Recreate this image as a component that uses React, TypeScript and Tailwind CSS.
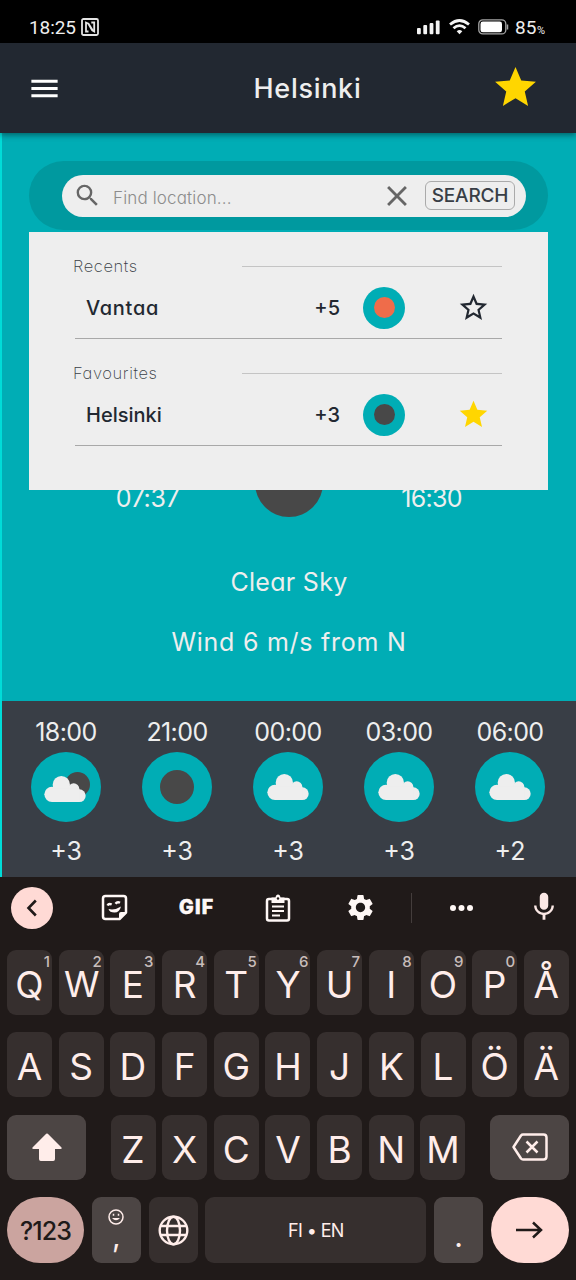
import type { ReactNode } from "react";
import { MdClose, MdMenu, MdMic, MdSearch, MdSettings, MdStar, MdStarBorder } from "react-icons/md";

function StatusBar() {
  return (
    <div className="flex h-[43px] shrink-0 items-start bg-black pt-[18px] pr-[30px] pl-[29px] font-[Roboto,sans-serif] text-[19px] leading-[20px] text-[#eeeeee]">
      <span className="w-[52px] tracking-[-0.1px]">18:25</span>
      <svg className="h-[18px] w-[18px]" viewBox="0 0 18 18" fill="none" stroke="#e4e4e4" strokeWidth="1.800">
        <rect x="1" y="1" width="16" height="16" rx="1.5" />
        <path d="M7.500 13.500H5V4.600l2.500 1.200L11.500 12M10.300 4.500H13.200V13.400L11.200 12.300L7.800 6.500" />
      </svg>
      <div className="ml-auto flex items-start">
        <svg className="mt-[2px] h-[15px] w-[23px]" viewBox="0 0 23 15" fill="#f4f4f4">
          <rect x="0" y="8" width="3.800" height="6.300" rx="1" />
          <rect x="6.300" y="5" width="3.800" height="9.300" rx="1" />
          <rect x="12.600" y="3" width="3.800" height="11.300" rx="1" />
          <rect x="18.800" y="0.500" width="3.800" height="13.800" rx="1" />
        </svg>
        <svg className="mt-px ml-[9px] h-[16px] w-[21px]" viewBox="0 0 21 16" fill="none" stroke="#f4f4f4" strokeWidth="2.800">
          <path d="M1 5.500Q10.500-2.500 20 5.500" />
          <path d="M4.500 9.300Q10.500 4 16.500 9.300" />
          <path d="M7.700 12.300Q10.500 9.500 13.300 12.300L10.500 15.300Z" fill="#f4f4f4" stroke="none" />
        </svg>
        <svg className="mt-[1px] ml-[8px] h-[16px] w-[31px]" viewBox="0 0 31 16" fill="none">
          <rect x="0.800" y="0.900" width="27" height="14" rx="4" stroke="#a5a5a5" strokeWidth="1.300" />
          <rect x="2.500" y="2.600" width="21.500" height="10.600" rx="2.300" fill="#fff" />
          <path d="M29.500 5.500v5" stroke="#a5a5a5" strokeWidth="1.500" />
        </svg>
        <span className="ml-[6px] w-[22px]">85</span>
        <span className="mt-[3px] w-[9px] text-[11px]">%</span>
      </div>
    </div>
  );
}

function Cloud({ className }: { className: string }) {
  return (
    <svg className={className} viewBox="0 0 124 78" fill="#eeeeee">
      <circle cx="51" cy="26" r="26" />
      <circle cx="88" cy="39" r="17" />
      <circle cx="23" cy="55" r="23" />
      <circle cx="105" cy="59" r="19" />
      <rect x="23" y="38" width="82" height="40" />
    </svg>
  );
}

type Place = { section: string; name: string; nameStyle: string; temp: string; dot: string; starred: boolean };
const places: Place[] = [
  { section: "Recents", name: "Vantaa", nameStyle: "tracking-[0.7px]", temp: "+5", dot: "bg-[#ef6c4a]", starred: false },
  { section: "Favourites", name: "Helsinki", nameStyle: "tracking-normal", temp: "+3", dot: "bg-[#484848]", starred: true },
];

function PlaceSection({ place }: { place: Place }) {
  return (
    <div className="h-[107px]">
      <div className="flex h-[20px] items-center">
        <span className="w-[169px] text-[16.500px] font-extralight tracking-[0.6px] text-[#393e46]">{place.section}</span>
        <span className="h-px w-[260px] bg-[#c4c4c4]" />
      </div>
      <div className="ml-[2px] flex h-[63px] w-[427px] items-center border-b border-[#a8a8a8] pt-px text-[20px] font-medium text-[#222831]">
        <span className={`w-[229px] pl-[11px] ${place.nameStyle}`}>{place.name}</span>
        <span className="w-[36px] text-right">{place.temp}</span>
        <span className="ml-[23px] flex h-[42px] w-[42px] items-center justify-center rounded-full bg-[#00adb5]">
          <span className={`h-[21px] w-[21px] rounded-full ${place.dot}`} />
        </span>
        <span className="ml-[52px]">
          {place.starred ? <MdStar size={33} color="#ffd600" /> : <MdStarBorder size={33} />}
        </span>
      </div>
    </div>
  );
}

function WeatherPanel() {
  return (
    <div className="relative flex h-[568px] shrink-0 flex-col border-l-2 border-[#00dcd8] bg-[#00adb5] pt-[28px] text-[#eeeeee]">
      <div className="ml-[27px] flex h-[69px] w-[519px] items-center rounded-full bg-[#00999f] pl-[33px]">
        <div className="flex h-[42px] w-[464px] items-center rounded-full bg-[#eeeeee] pl-[11px]">
          <MdSearch size={29} color="#666666" />
          <span className="mt-[5px] ml-[11px] w-[267px] text-[17px] font-light tracking-[0.15px] text-[#8c8c8c]">Find location...</span>
          <MdClose size={34} color="#666666" />
          <span className="ml-[11px] flex h-[29px] w-[90px] items-center justify-center rounded-[6px] border border-[#aaaaaa] text-[19px] font-medium tracking-[-0.15px] text-[#393e46]">
            SEARCH
          </span>
        </div>
      </div>
      <div className="mt-[220px] grid grid-cols-[291px_277px] text-center text-[25px]">
        <span className="pt-[34px] leading-[28px] tracking-[-0.4px]">07:37</span>
        <span className="pt-[34px] leading-[28px] tracking-[-0.7px]">16:30</span>
      </div>
      <div className="absolute top-[316px] left-[253px] h-[68px] w-[68px] rounded-full bg-[#484848]" />
      <div className="mt-[55px] text-center text-[25px] leading-[30px] tracking-[0.3px]">Clear Sky</div>
      <div className="mt-[30px] text-center text-[25px] leading-[30px] tracking-[0.75px]">Wind 6 m/s from N</div>
      <div className="absolute top-[99px] left-[27px] h-[258px] w-[519px] bg-[#eeeeee] pt-[24px] pl-[44px]">
        {places.map((place) => (
          <PlaceSection key={place.name} place={place} />
        ))}
      </div>
    </div>
  );
}

const forecast = [
  { time: "18:00", temp: "+3", sky: "partly" },
  { time: "21:00", temp: "+3", sky: "clear" },
  { time: "00:00", temp: "+3", sky: "cloudy" },
  { time: "03:00", temp: "+3", sky: "cloudy" },
  { time: "06:00", temp: "+2", sky: "cloudy" },
];

function Forecast() {
  return (
    <div className="grid h-[176px] shrink-0 grid-cols-[repeat(5,111px)] border-l-2 border-[#00dcd8] bg-[#393e46] pl-[8.500px] text-[25px] leading-[30px] text-[#eeeeee]">
      {forecast.map((slot) => (
        <div key={slot.time} className="flex flex-col items-center pt-[16px]">
          <span className="tracking-[-0.6px]">{slot.time}</span>
          <span className="relative mt-[5px] mb-[14px] flex h-[70px] w-[70px] items-center justify-center rounded-full bg-[#00adb5]">
            {slot.sky === "clear" && <span className="h-[34px] w-[34px] rounded-full bg-[#484848]" />}
            {slot.sky === "partly" && <span className="absolute top-[20px] left-[34px] h-[25px] w-[25px] rounded-full bg-[#484848]" />}
            {slot.sky === "partly" && <Cloud className="relative top-[2px] left-[-1px] h-[26px] w-[42px]" />}
            {slot.sky === "cloudy" && <Cloud className="h-[26px] w-[42px]" />}
          </span>
          <span>{slot.temp}</span>
        </div>
      ))}
    </div>
  );
}

function Toolbar() {
  return (
    <div className="flex h-[61px] items-center pl-[11px] text-[#fff8f6]">
      <span className="flex h-[42px] w-[42px] items-center justify-center rounded-full bg-[#ffdad5]">
        <svg className="h-[18px] w-[12px]" viewBox="0 0 12 18" fill="none" stroke="#201a19" strokeWidth="2.600">
          <path d="M9.800 1.500L2.500 9l7.300 7.500" />
        </svg>
      </span>
      <svg className="ml-[48px] h-[27px] w-[27px]" viewBox="0 0 27 27" fill="none" stroke="currentColor" strokeWidth="2.500">
        <path d="M18.500 25H4.500Q2 25 2 22.500V4.500Q2 2 4.500 2h18Q25 2 25 4.500V18.500Z" strokeLinejoin="round" />
        <path d="M18 25v-5q0-2 2-2h5Z" fill="currentColor" stroke="none" />
        <path d="M6.500 11.500q1.300-2.500 4.200-1M14.500 9.800q1.800-2.500 4.500-1" strokeWidth="2.400" />
        <path d="M7.500 15Q14 16.500 20 12.500Q18.500 18.500 13.500 18.500T7.500 15Z" fill="currentColor" stroke="none" />
      </svg>
      <span className="ml-[51px] w-[39px] text-[19.500px] font-extrabold tracking-[1.3px] [-webkit-text-stroke:0.6px_#fff8f6]">GIF</span>
      <svg className="ml-[47px] h-[28px] w-[26px]" viewBox="0 0 26 28" fill="none" stroke="currentColor" strokeWidth="2.500">
        <rect x="2" y="5" width="22" height="21.500" rx="2" />
        <path d="M6.500 3.500h4Q11 .5 13 .5t2.500 3h4V9h-13Z" fill="currentColor" stroke="none" />
        <circle cx="13" cy="4.500" r="1.200" fill="#201a19" stroke="none" />
        <path d="M7 12.500h12M7 17h12M7 21.500h8" strokeWidth="2.200" />
      </svg>
      <MdSettings className="ml-[54px]" size={31} />
      <span className="ml-[35px] h-[30px] w-px bg-[#443d3c]" />
      <svg className="ml-[38px] h-[6px] w-[23px]" viewBox="0 0 23 6" fill="currentColor">
        <circle cx="3" cy="3" r="3" />
        <circle cx="11.500" cy="3" r="3" />
        <circle cx="20" cy="3" r="3" />
      </svg>
      <MdMic className="mt-[-2px] ml-[54px] text-[#fbe8e5]" size={34} />
    </div>
  );
}

function Key({ letter, hint }: { letter: string; hint?: string }) {
  return (
    <div className="relative flex h-[65px] w-[45px] items-center justify-center rounded-[9px] bg-[#362f2e] pt-[4px] text-[37px] leading-none text-[#ffedea]">
      <span className={letter === "W" ? "tracking-[-1px] text-[36px]" : ""}>{letter}</span>
      {hint && <span className="absolute top-[4px] right-[2px] text-[15px] leading-[15px] font-medium text-[#c8bdbb]">{hint}</span>}
    </div>
  );
}

function SideKey({ children }: { children: ReactNode }) {
  return <div className="flex h-[65px] w-[79px] items-center justify-center rounded-[9px] bg-[#4c4544]">{children}</div>;
}

function Keyboard() {
  return (
    <div className="h-[403px] shrink-0 bg-[#201a19]">
      <Toolbar />
      <div className="flex flex-col gap-[17.500px] px-[7px] pt-[11.500px]">
        <div className="flex justify-between">
          {[..."QWERTYUIOPÅ"].map((letter, i) => (
            <Key key={letter} letter={letter} hint={"1234567890"[i]} />
          ))}
        </div>
        <div className="flex justify-between">
          {[..."ASDFGHJKLÖÄ"].map((letter) => (
            <Key key={letter} letter={letter} />
          ))}
        </div>
        <div className="flex justify-between">
          <SideKey>
            <svg className="h-[28px] w-[30px]" viewBox="0 0 30 28" fill="#ffedea">
              <path d="M14.200.800q.8-.8 1.600 0L29.500 14.500q.8 1.500-1 1.500H23v10q0 2-1.800 2H8.800Q7 28 7 26V16H1.500q-1.800 0-1-1.500Z" />
            </svg>
          </SideKey>
          <div className="flex w-[355px] justify-between">
            {[..."ZXCVBNM"].map((letter) => (
              <Key key={letter} letter={letter} />
            ))}
          </div>
          <SideKey>
            <svg className="h-[28px] w-[36px]" viewBox="0 0 36 28" fill="none" stroke="#ffedea" strokeWidth="2.500" strokeLinejoin="round">
              <path d="M11 1.500H31.500Q34.500 1.500 34.500 4.500V23.500Q34.500 26.500 31.500 26.500H11Q9.800 26.500 9 25.500L1.500 14L9 2.500Q9.800 1.500 11 1.500Z" />
              <path d="M14.500 8.500l11 11M25.500 8.500l-11 11" />
            </svg>
          </SideKey>
        </div>
        <div className="flex h-[66px] justify-between text-[#ffedea]">
          <div className="flex w-[77px] items-center justify-center rounded-[33px] bg-[#cba49f] pt-[2px] text-[25px] font-medium tracking-[-0.900px] text-[#201a19]">?123</div>
          <div className="flex w-[49px] flex-col items-center rounded-[9px] bg-[#4c4544] pt-[12px]">
            <svg className="h-[16px] w-[16px]" viewBox="0 0 16 16" fill="none" stroke="currentColor" strokeWidth="1.500">
              <circle cx="8" cy="8" r="7" />
              <path d="M4 9q4 4.500 8 0Z" fill="currentColor" stroke="none" />
              <path d="M5.500 4.800v2M10.500 4.800v2" />
            </svg>
            <span className="mt-[-4px] text-[30px] leading-[30px]">,</span>
          </div>
          <div className="flex w-[49px] items-center justify-center rounded-[9px] bg-[#362f2e]">
            <svg className="h-[31px] w-[31px]" viewBox="0 0 31 31" fill="none" stroke="currentColor" strokeWidth="2.400">
              <circle cx="15.500" cy="15.500" r="13.800" />
              <ellipse cx="15.500" cy="15.500" rx="6.500" ry="13.800" />
              <path d="M2.500 11h26M2.500 20h26" />
            </svg>
          </div>
          <div className="flex w-[221px] items-center justify-center rounded-[9px] bg-[#362f2e] pt-[2px] text-[18px] tracking-[-0.6px]">FI • EN</div>
          <div className="flex w-[49px] items-end justify-center rounded-[9px] bg-[#4c4544] pb-[12px] text-[30px] leading-[30px]">.</div>
          <div className="flex w-[78px] items-center justify-center rounded-[33px] bg-[#ffdad5]">
            <svg className="h-[18px] w-[27px]" viewBox="0 0 27 18" fill="none" stroke="#201a19" strokeWidth="2.500">
              <path d="M0 9h25M17 1.500L25 9l-8 7.500" />
            </svg>
          </div>
        </div>
      </div>
    </div>
  );
}

export default function App() {
  return (
    <div className="flex h-[1280px] w-[576px] flex-col overflow-hidden bg-[#201a19] font-[Inter,sans-serif] leading-none whitespace-nowrap [font-feature-settings:'cv11']">
      <StatusBar />
      <header className="relative z-10 flex h-[90px] shrink-0 items-center bg-[#222831] pl-[27px] text-[#eeeeee] shadow-[0_2px_6px_rgba(0,0,0,0.45)]">
        <MdMenu size={35} color="#ffffff" />
        <span className="ml-[152px] w-[187px] text-center text-[27px] font-medium tracking-[0.7px]">Helsinki</span>
        <MdStar className="mt-[-1px] ml-[90px]" size={49} color="#ffd600" />
      </header>
      <WeatherPanel />
      <Forecast />
      <Keyboard />
    </div>
  );
}
